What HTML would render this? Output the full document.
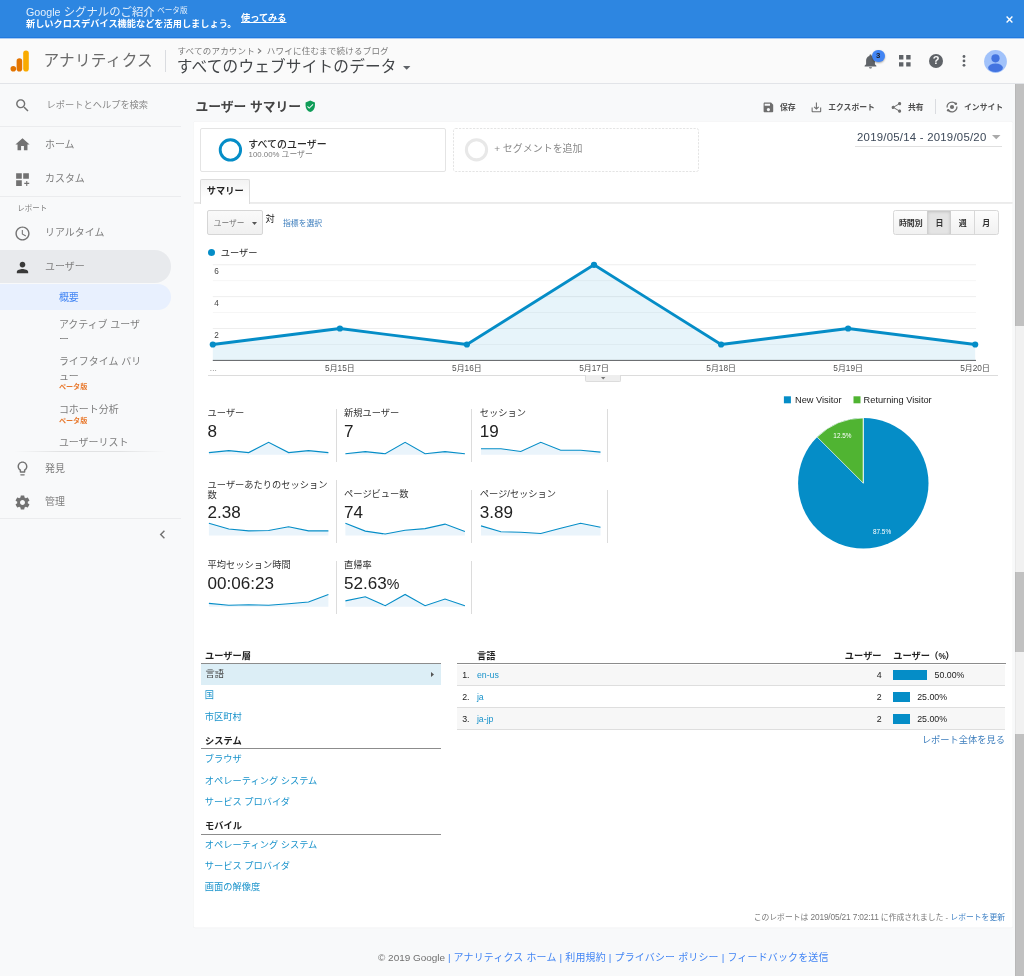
<!DOCTYPE html>
<html lang="ja">
<head>
<meta charset="utf-8">
<title>アナリティクス</title>
<style>
*{box-sizing:border-box;margin:0;padding:0}
html,body{width:1024px;height:976px;overflow:hidden;background:#f8f9fa}
body{font-family:"Liberation Sans","Noto Sans CJK JP",sans-serif;color:#222;position:relative;-webkit-font-smoothing:antialiased}
#w{position:absolute;left:0;top:0;width:1024px;height:976px;will-change:transform}
.a{position:absolute;white-space:nowrap}
.t{position:absolute;white-space:nowrap;line-height:1}
a{text-decoration:none;color:inherit}
svg{position:absolute;overflow:visible}
.b{font-weight:bold}
/* banner */
#banner{left:0;top:0;width:1024px;height:38px;background:#2d86e1;border-bottom:1px solid #2079df}
/* header */
#hdr{left:0;top:38px;width:1024px;height:46px;background:#fafafa;border-bottom:1px solid #e2e4e8}
/* sidebar */
.sbt{font-size:9.96px;color:#7d7d7d}
.sbs{font-size:9.96px;color:#7d7d7d;left:58.900px}
.beta{font-size:7.1px;color:#e8772a;font-weight:bold;left:58.900px}
.sep{position:absolute;height:1px;background:#ebecee;left:0;width:181px}
/* card */
.ml{font-size:9.24px;color:#333}
.mv{font-size:17.07px;color:#222}
.vd{position:absolute;width:1px;background:#dcdcdc}
.nav{font-size:9.24px;color:#1a93cb;left:204.800px}
.navh{font-size:9.24px;font-weight:bold;color:#222;left:205px}
.hl{position:absolute;height:1.3px;background:#8c8c8c}
.rl{position:absolute;height:1px;background:#dedede;left:457px;width:548px}
.td{font-size:8.8px;color:#222}
</style>
</head>
<body>
<div id="w">
<!-- BANNER -->
<div class="a" id="banner"></div>
<div class="t" style="left:26px;top:7px;font-size:11.38px;color:rgba(255,255,255,.87)"><span style="font-size:10.7px">Google</span> シグナルのご紹介<span style="font-size:7.6px;position:relative;top:-2.6px;left:2.5px">ベータ版</span></div>
<div class="t b" style="left:26px;top:20.300px;font-size:9.2px;color:#fff">新しいクロスデバイス機能などを活用しましょう。</div>
<div class="t b" style="left:241px;top:14.400px;font-size:9.2px;color:#fff;text-decoration:underline">使ってみる</div>
<svg style="left:1005.600px;top:15.800px" width="7" height="7" viewBox="0 0 7 7"><path d="M.6.6L6.400 6.400M6.400.6L.6 6.400" stroke="#fff" stroke-width="1.350" fill="none"/></svg>

<!-- HEADER -->
<div class="a" id="hdr"></div>
<div class="a" style="left:0;top:38px;width:1024px;height:1px;background:#a9cbf2"></div>
<svg style="left:10px;top:50.400px" width="20" height="22" viewBox="0 0 20 22">
<rect x="13.2" y="0.5" width="5.6" height="21" rx="2.8" fill="#f9ab00"/>
<rect x="6.6" y="8.3" width="5.6" height="13.2" rx="2.8" fill="#e37400"/>
<circle cx="3.3" cy="18.7" r="2.8" fill="#e37400"/>
</svg>
<div class="t" style="left:43.400px;top:53.400px;font-size:15.64px;color:#6a6a6a;letter-spacing:.28px">アナリティクス</div>
<div class="a" style="left:165px;top:50px;width:1px;height:22px;background:#dadce0"></div>
<div class="t" style="left:177.500px;top:46.700px;font-size:8.53px;color:#7a7a7a;letter-spacing:.2px">すべてのアカウント<span style="display:inline-block;width:11.800px"></span>ハワイに住むまで続けるブログ</div>
<svg style="left:257.400px;top:48.200px" width="5" height="6" viewBox="0 0 5 6"><path d="M1 .6L3.800 3 1 5.400" fill="none" stroke="#7a7a7a" stroke-width="1.100"/></svg>
<div class="t" style="left:176.800px;top:58.700px;font-size:15.64px;color:#424548;letter-spacing:.2px">すべてのウェブサイトのデータ</div>
<svg style="left:402.500px;top:65.500px" width="8" height="4" viewBox="0 0 8 4"><path d="M0 0h7.4L3.7 3.7z" fill="#5f6368"/></svg>
<!-- header icons -->
<svg style="left:864px;top:54px" width="13" height="15" viewBox="0 0 13 15"><path d="M6.5 14.6c.8 0 1.45-.65 1.45-1.45H5.05c0 .8.65 1.45 1.45 1.45zm4.4-4.3V6.6c0-2.2-1.2-4.1-3.3-4.6v-.5C7.6.9 7.1.4 6.5.4S5.4.9 5.4 1.5V2C3.3 2.500 2.100 4.400 2.100 6.600v3.700L.6 11.800v.7h11.800v-.7z" fill="#5f6368"/></svg>
<div class="a" style="left:872px;top:49.800px;width:12.6px;height:12.6px;border-radius:50%;background:#4285f4;box-shadow:0 1px 2px rgba(0,0,0,.35)"></div>
<div class="t" style="left:876px;top:52.300px;font-size:7.8px;color:#202124;font-weight:bold">3</div>
<svg style="left:898.800px;top:55.200px" width="12" height="12" viewBox="0 0 12 12"><path d="M0 0h4.400v4.400H0zM7.200 0h4.400v4.400H7.200zM0 7.200h4.400v4.400H0zM7.200 7.200h4.400v4.400H7.200z" fill="#5f6368"/></svg>
<div class="a" style="left:928.800px;top:53.900px;width:14px;height:14px;border-radius:50%;background:#5f6368"></div>
<div class="t b" style="left:932.700px;top:55.400px;font-size:11px;color:#fafafa">?</div>
<svg style="left:962px;top:55px" width="4" height="12" viewBox="0 0 4 12"><circle cx="2" cy="1.5" r="1.4" fill="#5f6368"/><circle cx="2" cy="5.900" r="1.4" fill="#5f6368"/><circle cx="2" cy="10.300" r="1.4" fill="#5f6368"/></svg>
<svg style="left:984px;top:49.800px" width="23" height="23" viewBox="0 0 23 23"><defs><clipPath id="av"><circle cx="11.500" cy="11.500" r="11.400"/></clipPath></defs><circle cx="11.500" cy="11.500" r="11.400" fill="#a1c2fa"/><g clip-path="url(#av)" fill="#4374e0"><circle cx="11.500" cy="8.300" r="4.100"/><ellipse cx="11.500" cy="17.800" rx="7.400" ry="4.300"/></g></svg>

<!-- SIDEBAR -->
<svg style="left:14px;top:97px" width="17" height="17" viewBox="0 0 24 24"><path fill="#727272" d="M15.5 14h-.79l-.28-.27C15.41 12.590 16 11.110 16 9.500 16 5.910 13.090 3 9.500 3S3 5.910 3 9.500 5.910 16 9.500 16c1.610 0 3.090-.59 4.230-1.570l.27.28v.79l5 4.990L20.490 19l-4.990-5zm-6 0C7.010 14 5 11.990 5 9.500S7.010 5 9.500 5 14 7.010 14 9.500 11.990 14 9.500 14z"/></svg>
<div class="t" style="left:46.500px;top:100.500px;font-size:9.24px;color:#8a8a8a">レポートとヘルプを検索</div>
<div class="sep" style="top:126px"></div>
<svg style="left:14px;top:136px" width="17" height="17" viewBox="0 0 24 24"><path fill="#727272" d="M10 20v-6h4v6h5v-8h3L12 3 2 12h3v8z"/></svg>
<div class="t sbt" style="left:45px;top:139.800px">ホーム</div>
<svg style="left:14px;top:170.700px" width="17" height="17" viewBox="0 0 24 24"><path fill="#727272" d="M3 3h8v8H3zM13 3h8v8h-8zM3 13h8v8H3zM17.250 14h1.500v2.750h2.750v1.500h-2.750V21h-1.500v-2.750H14.500v-1.500h2.750z"/></svg>
<div class="t sbt" style="left:45px;top:174.300px">カスタム</div>
<div class="sep" style="top:195.500px"></div>
<div class="t" style="left:17.300px;top:204.600px;font-size:7.5px;color:#808080">レポート</div>
<svg style="left:14px;top:224.600px" width="17" height="17" viewBox="0 0 24 24"><path fill="#727272" d="M11.990 2C6.470 2 2 6.480 2 12s4.470 10 9.990 10C17.520 22 22 17.520 22 12S17.520 2 11.990 2zM12 20c-4.420 0-8-3.580-8-8s3.580-8 8-8 8 3.580 8 8-3.580 8-8 8zm.5-13H11v6l5.250 3.150.75-1.230-4.500-2.670z"/></svg>
<div class="t sbt" style="left:45px;top:227.900px">リアルタイム</div>
<div class="a" style="left:0;top:250px;width:170.500px;height:32.500px;background:#e8eaed;border-radius:0 16.250px 16.250px 0"></div>
<svg style="left:14px;top:258.500px" width="17" height="17" viewBox="0 0 24 24"><path fill="#3a3a3a" d="M12 12c2.210 0 4-1.790 4-4s-1.790-4-4-4-4 1.790-4 4 1.790 4 4 4zm0 2c-2.670 0-8 1.340-8 4v2h16v-2c0-2.660-5.330-4-8-4z"/></svg>
<div class="t sbt" style="left:45px;top:262.200px">ユーザー</div>
<div class="a" style="left:0;top:283.700px;width:170.500px;height:26px;background:#e8f0fe;border-radius:0 13px 13px 0"></div>
<div class="t" style="left:58.900px;top:292.500px;font-size:9.96px;color:#4285f4">概要</div>
<div class="t sbs" style="top:319.500px">アクティブ ユーザ</div>
<div class="t sbs" style="top:334.800px">ー</div>
<div class="t sbs" style="top:356.700px">ライフタイム バリ</div>
<div class="t sbs" style="top:371.700px">ュー</div>
<div class="t beta" style="top:383.800px">ベータ版</div>
<div class="t sbs" style="top:404.800px">コホート分析</div>
<div class="t beta" style="top:417.500px">ベータ版</div>
<div class="t sbs" style="top:438.200px">ユーザーリスト</div>
<div class="a" style="left:14px;top:451px;width:152px;height:1px;background:linear-gradient(90deg,rgba(0,0,0,0),rgba(0,0,0,.09) 30%,rgba(0,0,0,.09) 70%,rgba(0,0,0,0))"></div>
<svg style="left:14px;top:459.800px" width="17" height="17" viewBox="0 0 24 24"><path fill="#727272" d="M9 21c0 .55.45 1 1 1h4c.55 0 1-.45 1-1v-1H9v1zm3-19C8.140 2 5 5.140 5 9c0 2.380 1.190 4.470 3 5.740V17c0 .55.45 1 1 1h6c.55 0 1-.45 1-1v-2.260c1.810-1.270 3-3.360 3-5.740 0-3.860-3.140-7-7-7zm2.850 11.100l-.85.6V16h-4v-2.300l-.85-.6C7.800 12.160 7 10.630 7 9c0-2.760 2.240-5 5-5s5 2.240 5 5c0 1.630-.8 3.160-2.150 4.100z"/></svg>
<div class="t sbt" style="left:45px;top:463.700px">発見</div>
<svg style="left:14px;top:494px" width="17" height="17" viewBox="0 0 24 24"><path fill="#727272" d="M19.430 12.980c.04-.32.07-.64.07-.98s-.03-.66-.07-.98l2.110-1.650c.19-.15.24-.42.12-.64l-2-3.460c-.12-.22-.39-.3-.61-.22l-2.490 1c-.52-.4-1.080-.73-1.690-.98l-.38-2.650C14.460 2.180 14.250 2 14 2h-4c-.25 0-.46.18-.49.42l-.38 2.650c-.61.25-1.170.59-1.690.98l-2.490-1c-.23-.09-.49 0-.61.22l-2 3.460c-.13.22-.07.49.12.64l2.110 1.650c-.04.32-.07.65-.07.980s.03.660.07.980l-2.110 1.650c-.19.150-.24.420-.12.640l2 3.460c.12.220.39.300.61.220l2.490-1c.52.400 1.080.730 1.690.980l.38 2.650c.03.240.24.420.49.420h4c.25 0 .46-.18.49-.42l.38-2.650c.61-.25 1.170-.59 1.690-.98l2.490 1c.23.090.49 0 .61-.22l2-3.460c.12-.22.07-.49-.12-.64l-2.110-1.650zM12 15.500c-1.930 0-3.500-1.570-3.500-3.500s1.570-3.500 3.500-3.500 3.500 1.570 3.500 3.500-1.570 3.500-3.500 3.500z"/></svg>
<div class="t sbt" style="left:45px;top:497.300px">管理</div>
<div class="sep" style="top:518px"></div>
<svg style="left:154px;top:526px" width="17" height="17" viewBox="0 0 24 24"><path fill="#727272" d="M15.410 7.410L14 6l-6 6 6 6 1.410-1.410L10.830 12z"/></svg>

<!-- MAIN -->
<div class="t b" style="left:195.400px;top:100.600px;font-size:12.8px;color:#454545">ユーザー サマリー</div>
<svg style="left:304px;top:100px" width="12.5" height="12.5" viewBox="0 0 24 24"><path fill="#0f9d58" d="M12 1L3 5v6c0 5.550 3.840 10.740 9 12 5.160-1.260 9-6.450 9-12V5l-9-4zm-2 16l-4-4 1.410-1.410L10 14.170l6.590-6.590L18 9l-8 8z"/></svg>
<!-- actions -->
<svg style="left:761.500px;top:100.500px" width="12.800" height="12.800" viewBox="0 0 24 24"><path fill="#6e6e6e" d="M17 3H5c-1.110 0-2 .9-2 2v14c0 1.100.89 2 2 2h14c1.100 0 2-.9 2-2V7l-4-4zm-5 16c-1.660 0-3-1.340-3-3s1.340-3 3-3 3 1.340 3 3-1.340 3-3 3zm3-10H5V5h10v4z"/></svg>
<div class="t b" style="left:780px;top:103.700px;font-size:7.82px;color:#505050">保存</div>
<svg style="left:809.500px;top:100.500px" width="12.800" height="12.800" viewBox="0 0 24 24"><path fill="#6e6e6e" d="M19 12v7H5v-7H3v7c0 1.100.9 2 2 2h14c1.100 0 2-.9 2-2v-7h-2zm-6 .67l2.590-2.580L17 11.500l-5 5-5-5 1.410-1.410L11 12.670V3h2z"/></svg>
<div class="t b" style="left:828.200px;top:103.700px;font-size:7.82px;color:#505050">エクスポート</div>
<svg style="left:890px;top:100.500px" width="12.800" height="12.800" viewBox="0 0 24 24"><path fill="#6e6e6e" d="M18 16.080c-.76 0-1.440.3-1.960.77L8.910 12.700c.05-.23.09-.46.09-.7s-.04-.47-.09-.7l7.050-4.110c.54.5 1.250.81 2.040.81 1.660 0 3-1.340 3-3s-1.340-3-3-3-3 1.340-3 3c0 .24.04.47.09.7L8.040 9.810C7.500 9.310 6.790 9 6 9c-1.660 0-3 1.340-3 3s1.340 3 3 3c.79 0 1.500-.31 2.040-.81l7.120 4.160c-.05.210-.08.430-.08.650 0 1.610 1.310 2.920 2.920 2.920 1.610 0 2.920-1.310 2.920-2.920s-1.310-2.920-2.920-2.920z"/></svg>
<div class="t b" style="left:908px;top:103.700px;font-size:7.82px;color:#505050">共有</div>
<div class="a" style="left:935px;top:99px;width:1px;height:14.500px;background:#dadce0"></div>
<svg style="left:945.500px;top:100.500px" width="12" height="12" viewBox="0 0 12 12"><g fill="none" stroke="#6e6e6e" stroke-width="1.25"><path d="M1.12 6.43A4.9 4.9 0 0 1 9.64 2.72"/><path d="M10.88 5.57A4.9 4.9 0 0 1 2.36 9.28"/></g><circle cx="9.84" cy="2.82" r="1.25" fill="#6e6e6e"/><circle cx="2.16" cy="9.18" r="1.25" fill="#6e6e6e"/><circle cx="6" cy="6" r="2.1" fill="#6e6e6e"/></svg>
<div class="t b" style="left:964px;top:103.700px;font-size:7.82px;color:#505050">インサイト</div>

<svg style="left:0;top:0" width="1024" height="976"><rect x="193.200" y="121.300" width="819.900" height="807" rx="2" fill="rgba(0,0,0,.035)"/><rect x="193.700" y="121.800" width="818.900" height="805.800" rx="1.500" fill="#fff"/></svg>
<!-- segments -->
<div class="a" style="left:200px;top:128px;width:245.700px;height:43.500px;border:1px solid #e4e4e4;border-radius:2px;background:#fff"></div>
<svg style="left:0;top:0" width="1024" height="200"><circle cx="230.400" cy="149.900" r="10.200" fill="none" stroke="#058dc7" stroke-width="2.900"/><circle cx="476.500" cy="149.800" r="10.100" fill="none" stroke="#e8e8e8" stroke-width="3.100"/></svg>
<div class="t" style="left:248.300px;top:140.100px;font-size:9.96px;color:#2a2a2a;font-weight:500">すべてのユーザー</div>
<div class="t" style="left:248.600px;top:151.400px;font-size:7.82px;color:#7a7a7a">100.00% ユーザー</div>
<svg style="left:453px;top:128px" width="246" height="44" viewBox="0 0 246 44"><rect x=".5" y=".5" width="245" height="43" rx="2" fill="none" stroke="#e4e4e4" stroke-width="1" stroke-dasharray="2.200 1.300"/></svg>
<div class="t" style="left:494.300px;top:143.800px;font-size:9.96px;color:#8a8a8a">+ セグメントを追加</div>
<!-- date -->
<div class="t" style="left:857px;top:131.800px;font-size:11.38px;color:#3c4858;letter-spacing:.24px">2019/05/14 - 2019/05/20</div>
<svg style="left:992.300px;top:135px" width="8.500" height="4.300" viewBox="0 0 8.500 4.300"><path d="M0 0h8.500L4.250 4.300z" fill="#aaa"/></svg>
<div class="a" style="left:854.700px;top:146px;width:147px;height:1px;background:#e0e0e0"></div>
<!-- tab -->
<svg style="left:0;top:0" width="1024" height="210"><rect x="194" y="202.200" width="818.600" height="1.500" fill="#e6e6e6"/></svg>
<div class="a" style="left:200px;top:179px;width:50px;height:25px;border:1px solid #dcdcdc;border-bottom:none;border-radius:2px 2px 0 0;background:linear-gradient(#f3f3f3,#fff 75%)"></div>
<div class="t b" style="left:206.800px;top:186.600px;font-size:9.24px;color:#222">サマリー</div>
<!-- controls -->
<div class="a" style="left:207.300px;top:210.200px;width:55.300px;height:25.200px;border:1px solid #d6d6d6;border-radius:2px;background:linear-gradient(#fafafa,#f0f0f0)"></div>
<div class="t" style="left:213.800px;top:219.700px;font-size:7.7px;color:#707070">ユーザー</div>
<svg style="left:251.700px;top:221.800px" width="5" height="3" viewBox="0 0 5 3"><path d="M0 0h5L2.500 3z" fill="#555"/></svg>
<div class="t" style="left:265.600px;top:215.300px;font-size:9.24px;color:#222">対</div>
<div class="t" style="left:283px;top:219.500px;font-size:7.82px;color:#3d7ebd">指標を選択</div>
<!-- period buttons -->
<div class="a" style="left:893px;top:210.200px;width:105.700px;height:25.300px;border:1px solid #d8d8d8;border-radius:2.500px;background:linear-gradient(#fdfdfd,#f1f1f1)"></div>
<div class="a" style="left:927.300px;top:211.200px;width:23.900px;height:23.300px;background:#e4e4e4;border-left:1px solid #cfcfcf;border-right:1px solid #cfcfcf;box-shadow:inset 0 1px 3px rgba(0,0,0,.16)"></div>
<div class="a" style="left:974.300px;top:211.200px;width:1px;height:23.300px;background:#d8d8d8"></div>
<div class="t b" style="left:898.9px;top:219.800px;font-size:7.95px;color:#333">時間別</div>
<div class="t b" style="left:935.5px;top:219.800px;font-size:7.95px;color:#333">日</div>
<div class="t b" style="left:958.7px;top:219.800px;font-size:7.95px;color:#333">週</div>
<div class="t b" style="left:982.2px;top:219.800px;font-size:7.95px;color:#333">月</div>
<!-- legend -->
<div class="a" style="left:207.500px;top:249.100px;width:7px;height:7px;border-radius:50%;background:#058dc7"></div>
<div class="t" style="left:220.800px;top:248.500px;font-size:9.24px;color:#222">ユーザー</div>
<!--CHART--><svg style="left:0;top:0" width="1024" height="976" font-family="'Liberation Sans','Noto Sans CJK JP',sans-serif">
<line x1="212.8" x2="976" y1="344.46" y2="344.46" stroke="#f6f6f6" stroke-width="1"/><line x1="212.8" x2="976" y1="328.52" y2="328.52" stroke="#eeeeee" stroke-width="1"/><line x1="212.8" x2="976" y1="312.58" y2="312.58" stroke="#f6f6f6" stroke-width="1"/><line x1="212.8" x2="976" y1="296.64" y2="296.64" stroke="#eeeeee" stroke-width="1"/><line x1="212.8" x2="976" y1="280.70" y2="280.70" stroke="#f6f6f6" stroke-width="1"/><line x1="212.8" x2="976" y1="264.76" y2="264.76" stroke="#eeeeee" stroke-width="1"/>
<path d="M212.8,360.4 L212.8,344.5 L339.9,328.5 L466.9,344.5 L594.0,264.8 L721.1,344.5 L848.1,328.5 L975.2,344.5 L975.2,360.4 Z" fill="#058dc7" fill-opacity=".095"/>
<line x1="212.8" x2="976" y1="360.4" y2="360.4" stroke="#5c5f62" stroke-width="1"/>
<polyline points="212.8,344.5 339.9,328.5 466.9,344.5 594.0,264.8 721.1,344.5 848.1,328.5 975.2,344.5" fill="none" stroke="#058dc7" stroke-width="2.8" stroke-linejoin="round"/>
<circle cx="212.8" cy="344.5" r="3.1" fill="#058dc7"/><circle cx="339.9" cy="328.5" r="3.1" fill="#058dc7"/><circle cx="466.9" cy="344.5" r="3.1" fill="#058dc7"/><circle cx="594.0" cy="264.8" r="3.1" fill="#058dc7"/><circle cx="721.1" cy="344.5" r="3.1" fill="#058dc7"/><circle cx="848.1" cy="328.5" r="3.1" fill="#058dc7"/><circle cx="975.2" cy="344.5" r="3.1" fill="#058dc7"/>
<text x="214.300" y="337.8" font-size="8.2" fill="#444">2</text><text x="214.300" y="305.9" font-size="8.2" fill="#444">4</text><text x="214.300" y="274.1" font-size="8.2" fill="#444">6</text><text x="339.9" y="371.200" font-size="7.9" fill="#505050" text-anchor="middle"><tspan font-size="8.3">5</tspan>月<tspan font-size="8.3">15</tspan>日</text><text x="466.9" y="371.200" font-size="7.9" fill="#505050" text-anchor="middle"><tspan font-size="8.3">5</tspan>月<tspan font-size="8.3">16</tspan>日</text><text x="594.0" y="371.200" font-size="7.9" fill="#505050" text-anchor="middle"><tspan font-size="8.3">5</tspan>月<tspan font-size="8.3">17</tspan>日</text><text x="721.1" y="371.200" font-size="7.9" fill="#505050" text-anchor="middle"><tspan font-size="8.3">5</tspan>月<tspan font-size="8.3">18</tspan>日</text><text x="848.1" y="371.200" font-size="7.9" fill="#505050" text-anchor="middle"><tspan font-size="8.3">5</tspan>月<tspan font-size="8.3">19</tspan>日</text><text x="989.9" y="371.200" font-size="7.9" fill="#505050" text-anchor="end"><tspan font-size="8.3">5</tspan>月<tspan font-size="8.3">20</tspan>日</text>
<text x="209.500" y="371.200" font-size="7.6" fill="#666">…</text>
</svg><!--/CHART-->
<div class="a" style="left:208.200px;top:375px;width:789.500px;height:1px;background:#dcdcdc"></div>
<div class="a" style="left:585px;top:375px;width:35.700px;height:6.500px;background:#eee;border:1px solid #dcdcdc;border-top:none;border-radius:0 0 2px 2px"></div>
<svg style="left:601px;top:376.600px" width="4.400" height="2.600" viewBox="0 0 4.400 2.600"><path d="M0 0h4.400L2.200 2.600z" fill="#777"/></svg>
<!-- metrics -->
<div class="t ml" style="left:207.600px;top:409.15px">ユーザー</div>
<div class="t mv" style="left:207.600px;top:422.90px">8</div>
<div class="t ml" style="left:344.100px;top:409.15px">新規ユーザー</div>
<div class="t mv" style="left:344.100px;top:422.90px">7</div>
<div class="t ml" style="left:479.800px;top:409.15px">セッション</div>
<div class="t mv" style="left:479.800px;top:422.90px">19</div>
<div class="t ml" style="left:207.600px;top:480.55px">ユーザーあたりのセッション</div>
<div class="t ml" style="left:207.600px;top:490.700px">数</div>
<div class="t mv" style="left:207.600px;top:503.90px">2.38</div>
<div class="t ml" style="left:344.100px;top:489.75px">ページビュー数</div>
<div class="t mv" style="left:344.100px;top:503.90px">74</div>
<div class="t ml" style="left:479.800px;top:489.75px">ページ/セッション</div>
<div class="t mv" style="left:479.800px;top:503.90px">3.89</div>
<div class="t ml" style="left:207.600px;top:561.15px">平均セッション時間</div>
<div class="t mv" style="left:207.600px;top:575.30px">00:06:23</div>
<div class="t ml" style="left:344.100px;top:561.15px">直帰率</div>
<div class="t mv" style="left:344.100px;top:575.30px">52.63<span style="font-size:14.2px">%</span></div>
<div class="vd" style="left:335.500px;top:409px;height:53.200px"></div>
<div class="vd" style="left:471.400px;top:409px;height:53.200px"></div>
<div class="vd" style="left:607px;top:409px;height:53.200px"></div>
<div class="vd" style="left:335.500px;top:480px;height:63px"></div>
<div class="vd" style="left:471.400px;top:490px;height:53px"></div>
<div class="vd" style="left:607px;top:490px;height:53px"></div>
<div class="vd" style="left:335.500px;top:560.700px;height:53px"></div>
<div class="vd" style="left:471.400px;top:560.700px;height:53px"></div>
<!--SPARKS--><svg style="left:0;top:0" width="1024" height="976"><path d="M208.9,454.7 L208.9,452.6 L228.8,450.6 L248.7,452.6 L268.6,442.3 L288.6,452.6 L308.5,450.6 L328.4,452.6 L328.4,454.7 Z" fill="#eaf4fb"/><polyline points="208.9,452.6 228.8,450.6 248.7,452.6 268.6,442.3 288.6,452.6 308.5,450.6 328.4,452.6" fill="none" stroke="#058dc7" stroke-width="1.1"/><path d="M345.4,454.7 L345.4,453.7 L365.3,451.6 L385.2,453.7 L405.1,442.3 L425.1,453.7 L445.0,451.6 L464.9,453.7 L464.9,454.7 Z" fill="#eaf4fb"/><polyline points="345.4,453.7 365.3,451.6 385.2,453.7 405.1,442.3 425.1,453.7 445.0,451.6 464.9,453.7" fill="none" stroke="#058dc7" stroke-width="1.1"/><path d="M481.0,454.7 L481.0,448.7 L500.9,448.7 L520.8,451.5 L540.8,442.3 L560.7,450.3 L580.6,450.3 L600.5,452.1 L600.5,454.7 Z" fill="#eaf4fb"/><polyline points="481.0,448.7 500.9,448.7 520.8,451.5 540.8,442.3 560.7,450.3 580.6,450.3 600.5,452.1" fill="none" stroke="#058dc7" stroke-width="1.1"/><path d="M208.9,535.6 L208.9,523.2 L228.8,529.0 L248.7,530.9 L268.6,530.5 L288.6,526.7 L308.5,530.9 L328.4,530.9 L328.4,535.6 Z" fill="#eaf4fb"/><polyline points="208.9,523.2 228.8,529.0 248.7,530.9 268.6,530.5 288.6,526.7 308.5,530.9 328.4,530.9" fill="none" stroke="#058dc7" stroke-width="1.1"/><path d="M345.4,535.6 L345.4,523.2 L365.3,531.1 L385.2,534.0 L405.1,530.2 L425.1,528.6 L445.0,524.1 L464.9,531.5 L464.9,535.6 Z" fill="#eaf4fb"/><polyline points="345.4,523.2 365.3,531.1 385.2,534.0 405.1,530.2 425.1,528.6 445.0,524.1 464.9,531.5" fill="none" stroke="#058dc7" stroke-width="1.1"/><path d="M481.0,535.6 L481.0,525.9 L500.9,531.7 L520.8,532.3 L540.8,533.5 L560.7,528.2 L580.6,523.2 L600.5,527.2 L600.5,535.6 Z" fill="#eaf4fb"/><polyline points="481.0,525.9 500.9,531.7 520.8,532.3 540.8,533.5 560.7,528.2 580.6,523.2 600.5,527.2" fill="none" stroke="#058dc7" stroke-width="1.1"/><path d="M208.9,606.7 L208.9,603.4 L228.8,605.3 L248.7,604.8 L268.6,605.3 L288.6,603.8 L308.5,602.0 L328.4,594.4 L328.4,606.7 Z" fill="#eaf4fb"/><polyline points="208.9,603.4 228.8,605.3 248.7,604.8 268.6,605.3 288.6,603.8 308.5,602.0 328.4,594.4" fill="none" stroke="#058dc7" stroke-width="1.1"/><path d="M345.4,606.7 L345.4,600.9 L365.3,596.8 L385.2,605.7 L405.1,594.4 L425.1,605.7 L445.0,599.1 L464.9,605.7 L464.9,606.7 Z" fill="#eaf4fb"/><polyline points="345.4,600.9 365.3,596.8 385.2,605.7 405.1,594.4 425.1,605.7 445.0,599.1 464.9,605.7" fill="none" stroke="#058dc7" stroke-width="1.1"/></svg><!--/SPARKS-->
<!--PIE--><svg style="left:0;top:0" width="1024" height="976" font-family="'Liberation Sans',sans-serif">
<circle cx="863.3" cy="483.2" r="65.2" fill="#058dc7"/>
<path d="M863.3,483.2 L817.20,437.10 A65.2,65.2 0 0 1 863.3,418.0 Z" fill="#50b432" stroke="#fff" stroke-width="0.7" stroke-linejoin="round"/>
<line x1="863.3" y1="483.2" x2="863.3" y2="418.0" stroke="#fff" stroke-width="0.7"/>
<text x="842.400" y="438" font-size="6.4" fill="#fff" text-anchor="middle">12.5%</text>
<text x="882" y="533.600" font-size="6.4" fill="#fff" text-anchor="middle">87.5%</text>
<rect x="783.900" y="396.300" width="7" height="7" fill="#058dc7"/>
<text x="795" y="402.900" font-size="9.24" fill="#222">New Visitor</text>
<rect x="853.500" y="396.300" width="7" height="7" fill="#50b432"/>
<text x="863.600" y="402.900" font-size="9.24" fill="#222">Returning Visitor</text>
</svg><!--/PIE-->
<!-- left nav table -->
<div class="t navh" style="top:651.800px">ユーザー層</div>
<div class="hl" style="left:200.500px;top:662.800px;width:240.700px"></div>
<div class="a" style="left:200.500px;top:664px;width:240.700px;height:20.700px;background:#dceef6"></div>
<div class="t" style="left:205.500px;top:669.800px;font-size:9.24px;color:#444">言語</div>
<svg style="left:430.500px;top:671.800px" width="3" height="5" viewBox="0 0 3 5"><path d="M0 0v5l3-2.500z" fill="#555"/></svg>
<div class="t nav" style="top:691.300px">国</div>
<div class="t nav" style="top:713.200px">市区町村</div>
<div class="t navh" style="top:736.700px">システム</div>
<div class="hl" style="left:200.500px;top:747.800px;width:240.700px"></div>
<div class="t nav" style="top:754.800px">ブラウザ</div>
<div class="t nav" style="top:777.100px">オペレーティング システム</div>
<div class="t nav" style="top:797.600px">サービス プロバイダ</div>
<div class="t navh" style="top:821.500px">モバイル</div>
<div class="hl" style="left:200.500px;top:833.800px;width:240.700px"></div>
<div class="t nav" style="top:841.200px">オペレーティング システム</div>
<div class="t nav" style="top:862.400px">サービス プロバイダ</div>
<div class="t nav" style="top:882.800px">画面の解像度</div>
<!-- right table -->
<div class="t navh" style="left:476.900px;top:651.800px">言語</div>
<div class="t navh" style="left:auto;right:142.400px;top:651.800px">ユーザー</div>
<div class="t navh" style="left:893.200px;top:651.800px">ユーザー<span style="margin-left:-.7px">（</span><span style="font-size:8.3px;letter-spacing:-.4px">%</span><span style="margin-left:-.2px">）</span></div>
<div class="hl" style="left:456.500px;top:662.800px;width:549px"></div>
<div class="a" style="left:457px;top:664.500px;width:548px;height:20.500px;background:#f7f7f7"></div>
<div class="a" style="left:457px;top:708px;width:548px;height:21px;background:#f7f7f7"></div>
<div class="rl" style="top:685px"></div>
<div class="rl" style="top:707px"></div>
<div class="rl" style="top:729px"></div>
<div class="t td" style="left:462.200px;top:670.60px">1.</div><div class="t td" style="left:476.900px;top:670.60px;color:#1a93cb">en-us</div>
<div class="t td" style="left:462.200px;top:692.80px">2.</div><div class="t td" style="left:476.900px;top:692.80px;color:#1a93cb">ja</div>
<div class="t td" style="left:462.200px;top:715.00px">3.</div><div class="t td" style="left:476.900px;top:715.00px;color:#1a93cb">ja-jp</div>
<div class="t td" style="left:auto;right:142.400px;top:670.60px">4</div>
<div class="t td" style="left:auto;right:142.400px;top:692.80px">2</div>
<div class="t td" style="left:auto;right:142.400px;top:715.00px">2</div>
<div class="a" style="left:893.200px;top:669.800px;width:34px;height:10px;background:#058dc7"></div>
<div class="a" style="left:893.200px;top:692px;width:17px;height:10px;background:#058dc7"></div>
<div class="a" style="left:893.200px;top:714.200px;width:17px;height:10px;background:#058dc7"></div>
<div class="t td" style="left:934.600px;top:670.60px">50.00%</div>
<div class="t td" style="left:917.200px;top:692.80px">25.00%</div>
<div class="t td" style="left:917.200px;top:715.00px">25.00%</div>
<div class="t" style="left:auto;right:19px;top:735.500px;font-size:9.24px;color:#3d7ebd">レポート全体を見る</div>
<div class="t" style="left:auto;right:19px;top:913px;font-size:7.82px;color:#777">このレポートは <span style="font-size:8.3px;letter-spacing:-.15px">2019/05/21 7:02:11</span> に作成されました - <span style="color:#3b7fc4">レポートを更新</span></div>
<!-- footer -->
<div class="t" style="left:378px;top:952.600px;font-size:9.96px;color:#707070">© 2019 Google <span style="color:#4285f4;letter-spacing:.19px">| アナリティクス ホーム | 利用規約 | プライバシー ポリシー | フィードバックを送信</span></div>

<!-- SCROLLBAR -->
<div class="a" style="left:1015px;top:84px;width:9px;height:892px;background:#f1f1f1;border-left:1px solid #e8e8e8"></div>
<div class="a" style="left:1015px;top:84px;width:9px;height:242px;background:#c1c1c1;border-left:1px solid #b8b8b8"></div>
<div class="a" style="left:1015px;top:572px;width:9px;height:80px;background:#c1c1c1;border-left:1px solid #b8b8b8"></div>
<div class="a" style="left:1015px;top:734px;width:9px;height:242px;background:#c1c1c1;border-left:1px solid #b8b8b8"></div>
</div>
</body>
</html>
